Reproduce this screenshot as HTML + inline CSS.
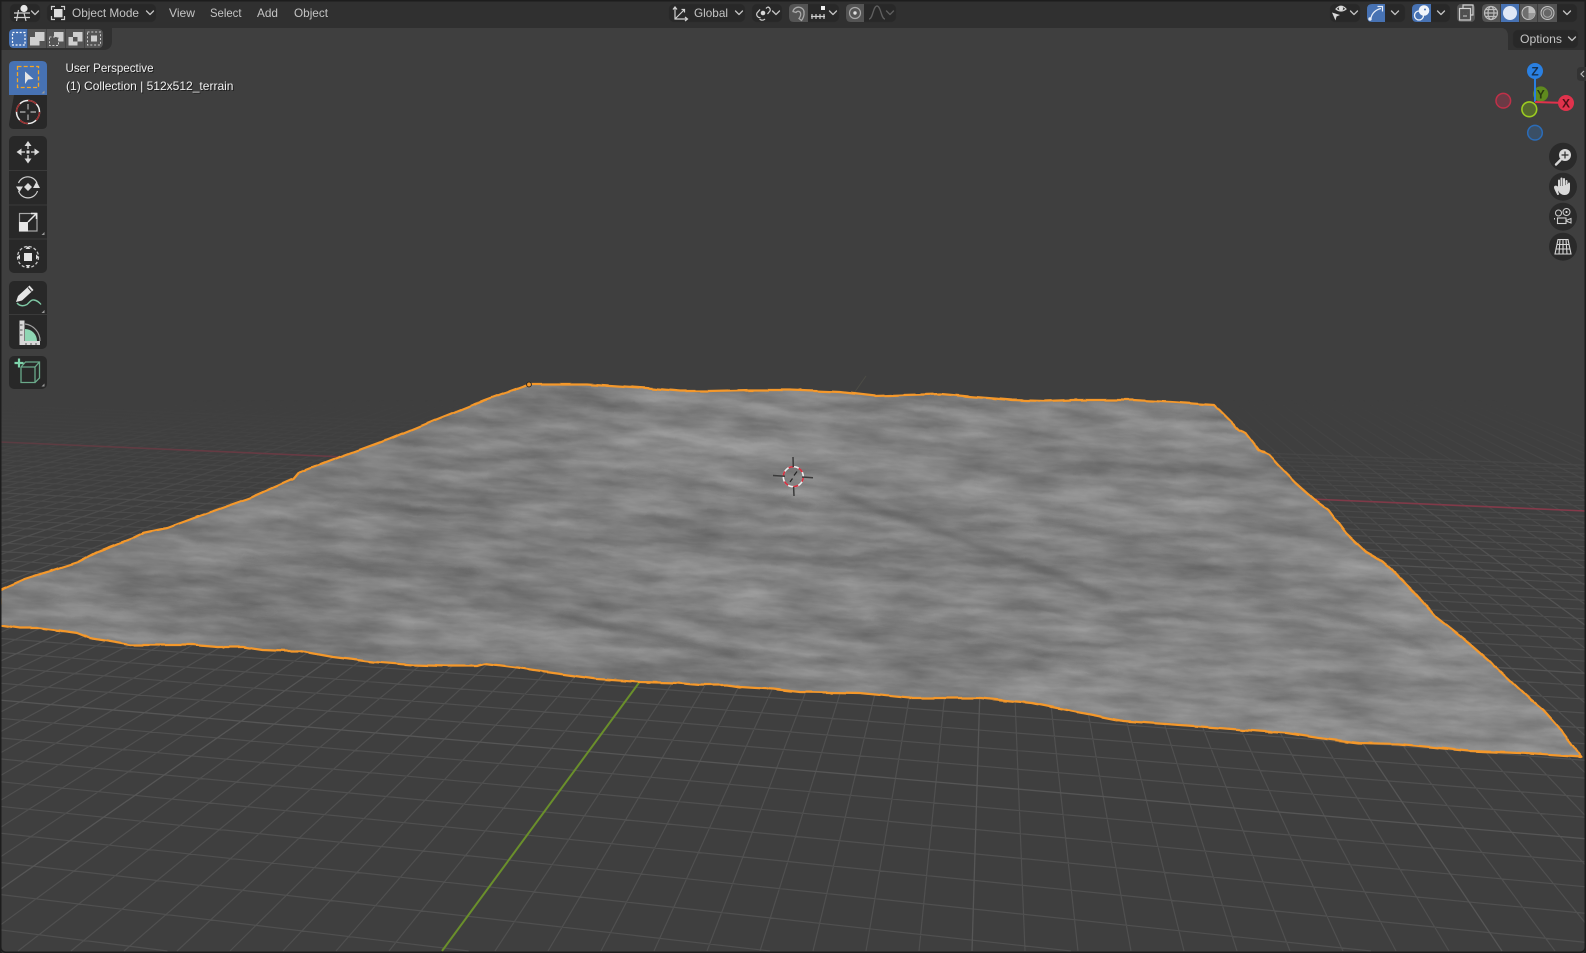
<!DOCTYPE html>
<html lang="en"><head><meta charset="utf-8"><title>Blender viewport</title>
<style>
html,body{margin:0;padding:0;background:#1d1d1d;width:1586px;height:953px;overflow:hidden}
svg{display:block;position:absolute;left:0;top:0}
text{font-family:"Liberation Sans",sans-serif;font-size:12px;fill:#c4c4c4}
.ch{fill:none;stroke:#c4c4c4;stroke-width:1.3;stroke-linecap:round;stroke-linejoin:round}
.ic{fill:none;stroke:#d0d0d0;stroke-width:1.2}
.w{fill:#d8d8d8;stroke:none}
</style></head><body>
<svg width="1586" height="953" viewBox="0 0 1586 953" xmlns="http://www.w3.org/2000/svg">
<defs>
<linearGradient id="fd" gradientUnits="userSpaceOnUse" x1="0" y1="400" x2="0" y2="700">
<stop offset="0" stop-color="#fff" stop-opacity="0"/><stop offset=".23" stop-color="#fff" stop-opacity=".4"/><stop offset=".53" stop-color="#fff" stop-opacity=".85"/><stop offset="1" stop-color="#fff" stop-opacity="1"/>
</linearGradient>
<mask id="gm" maskUnits="userSpaceOnUse" x="0" y="0" width="1586" height="953"><rect width="1586" height="953" fill="url(#fd)"/></mask>
<linearGradient id="red" gradientUnits="userSpaceOnUse" x1="0" y1="0" x2="1586" y2="0">
<stop offset="0" stop-color="#5a3c42"/><stop offset=".25" stop-color="#6d3a44"/><stop offset=".85" stop-color="#7e3a48"/><stop offset="1" stop-color="#843a4a"/>
</linearGradient>
<clipPath id="tc"><polygon id="tp" points="529,384 587,384 617,386 647,388 680,391 708,391 750,390 789,390 840,392 875,396 905,395 941,394 975,397 1012,400 1045,401 1072,400 1100,400 1133,400 1170,402 1214,405 1239,430 1246,433 1259,450 1269,455 1279,466 1296,483 1314,499 1329,510 1346,533 1366,552 1383,562 1391,569 1414,592 1436,617 1465,640 1497,668 1531,700 1543,710 1559,728 1581,757 1519,753 1469,751 1399,744 1359,743 1319,738 1286,733 1244,730 1194,726 1123,721 1072,711 1032,703 981,698 910,698 860,693 800,692 773,689 740,687 727,685 700,685 677,683 640,682 597,679 553,673 517,668 485,664 477,666 447,666 413,665 373,662 333,657 300,651 287,651 263,650 243,647 217,647 193,645 130,645 90,638 77,633 40,628 20,628 0,625 0,590 25,579 78,562 97,552 133,538 143,533 167,528 213,511 250,498 293,479 298,473 340,457 389,439 435,420 485,400 529,384"/></clipPath>
<filter id="noise" x="0" y="0" width="100%" height="100%" color-interpolation-filters="sRGB">
<feTurbulence type="fractalNoise" baseFrequency="0.005 0.03" numOctaves="3" seed="7" result="t1"/>
<feColorMatrix in="t1" type="matrix" values="1 0 0 0 0  1 0 0 0 0  1 0 0 0 0  0 0 0 0 1" result="a"/>
<feTurbulence type="fractalNoise" baseFrequency="0.018 0.09" numOctaves="4" seed="23" result="t2"/>
<feColorMatrix in="t2" type="matrix" values="1 0 0 0 0  1 0 0 0 0  1 0 0 0 0  0 0 0 0 1" result="b"/>
<feComposite in="a" in2="b" operator="arithmetic" k1="0" k2=".5" k3=".5" k4="0" result="c"/>
<feColorMatrix in="c" type="matrix" values=".38 0 0 0 .325  .38 0 0 0 .325  .38 0 0 0 .325  0 0 0 0 1"/>
</filter>
<filter id="wig" filterUnits="userSpaceOnUse" x="-5" y="370" width="1596" height="400" color-interpolation-filters="sRGB">
<feTurbulence type="fractalNoise" baseFrequency="0.05" numOctaves="2" seed="4" result="n"/>
<feDisplacementMap in="SourceGraphic" in2="n" scale="3" xChannelSelector="R" yChannelSelector="G"/>
</filter>
<filter id="bl" x="-20%" y="-200%" width="140%" height="500%"><feGaussianBlur stdDeviation="5 3"/></filter>
<linearGradient id="tone" gradientUnits="userSpaceOnUse" x1="0" y1="400" x2="1586" y2="750">
<stop offset="0" stop-color="#000" stop-opacity=".07"/><stop offset=".5" stop-color="#000" stop-opacity=".01"/><stop offset="1" stop-color="#fff" stop-opacity=".09"/>
</linearGradient>
</defs>

<!-- viewport -->
<rect width="1586" height="953" rx="4" fill="#3f3f3f"/>

<!-- grid -->
<g mask="url(#gm)" fill="none">
<path stroke="#505050" stroke-width="1.2" d="M0 929.8L167.5 951M0 894.5L468.7 951M0 862.4L770 951M0 833.1L1071 951M0 806.3L1371 951M0 781.7L1586 942.4M0 758.9L1586 913.4M0 737.9L1586 886.8M0 718.3L1586 861.9M0 683.2L1586 817.3M0 667.3L1586 797.1M0 652.4L1586 778.2M0 638.4L1586 760.4M0 625.3L1586 743.8M0 612.9L1586 728M0 601.2L1586 713.1M0 590.2L1586 699.2M0 579.7L1586 685.8M0 560.3L1586 661.2M0 551.4L1586 649.9M0 542.8L1586 639M0 534.7L1586 628.7M0 526.9L1586 618.8M0 519.5L1586 609.4M0 512.4L1586 600.4M0 505.6L1586 591.7M0 499.1L1586 583.5M0 486.8L1586 567.8M0 481L1586 560.5M0 475.5L1586 553.5M0 470.2L1586 546.7M0 465.1L1586 540.3M0 460.1L1586 533.9M0 455.3L1586 527.8M0 450.7L1586 522M0 446.3L1586 516.4M0 437.9L1586 505.7M0 433.9L1586 500.6M0 430L1586 495.7M0 426.2L1586 490.9M0 422.6L1586 486.3M0 419.1L1586 481.8M0 415.6L1586 477.4M0 412.3L1586 473.2M0 409.1L1586 469.1
M-1943 951L353.6 360M-1890 951L365.2 360M-1837 951L376.8 360M-1784 951L388.4 360M-1731 951L399.9 360M-1625 951L423.1 360M-1572 951L434.6 360M-1519 951L446.2 360M-1466 951L457.8 360M-1413 951L469.3 360M-1360 951L480.9 360M-1307 951L492.5 360M-1254 951L504.1 360M-1201 951L515.6 360M-1095 951L538.8 360M-1042 951L550.3 360M-989 951L561.9 360M-936 951L573.5 360M-883 951L585.1 360M-830 951L596.6 360M-777 951L608.2 360M-724 951L619.8 360M-671 951L631.3 360M-565 951L654.5 360M-512 951L666.1 360M-459 951L677.6 360M-406 951L689.2 360M-353 951L700.8 360M-300 951L712.3 360M-247 951L723.9 360M-194 951L735.5 360M-141 951L747 360M-35 951L770.2 360M18 951L781.7 360M71 951L793.3 360M124 951L804.9 360M177 951L816.5 360M230 951L828 360M283 951L839.6 360M336 951L851.2 360M389 951L862.7 360M495 951L885.9 360M548 951L897.4 360M601 951L909 360M654 951L920.6 360M707 951L932.2 360M760 951L943.7 360M813 951L955.3 360M866 951L966.9 360M919 951L978.4 360M1025 951L1001.6 360M1078 951L1013.1 360M1131 951L1024.7 360M1184 951L1036.3 360M1237 951L1047.9 360M1290 951L1059.4 360M1343 951L1071 360M1396 951L1082.6 360M1449 951L1094.1 360M1555 951L1117.3 360M1608 951L1128.8 360M1661 951L1140.4 360M1714 951L1152 360M1767 951L1163.6 360M1820 951L1175.1 360M1873 951L1186.7 360M1926 951L1198.3 360M1979 951L1209.8 360M2085 951L1233 360M2138 951L1244.5 360M2191 951L1256.1 360M2244 951L1267.7 360M2297 951L1279.3 360M2350 951L1290.8 360M2403 951L1302.4 360M2456 951L1314 360M2509 951L1325.5 360M2615 951L1348.7 360M2668 951L1360.2 360M2721 951L1371.8 360M2774 951L1383.4 360M2827 951L1395 360"/>
<path stroke="#565656" stroke-width="1.3" d="M0 700.1L1586 838.8M0 569.8L1586 673.3M0 492.8L1586 575.5M0 406L1586 465.2M-1678 951L411.5 360M-1148 951L527.2 360M-618 951L642.9 360M-88 951L758.6 360M972 951L990 360M1502 951L1105.7 360M2032 951L1221.4 360M2562 951L1337.1 360"/>
</g>
<line x1="0" y1="442" x2="1586" y2="511" stroke="url(#red)" stroke-width="1.6"/>
<line x1="442" y1="951" x2="641" y2="680" stroke="#6a8f2b" stroke-width="2"/>
<line x1="852" y1="396" x2="866" y2="376" stroke="#4c4c46" stroke-width="1"/>

<!-- terrain -->
<g filter="url(#wig)">
<g clip-path="url(#tc)">
<rect x="-60" y="320" width="1710" height="500" fill="#808080" filter="url(#noise)" transform="rotate(3 793 560)"/>
<rect x="0" y="370" width="1586" height="400" fill="url(#tone)"/>
<g filter="url(#bl)" fill="none" stroke="#4e4e4e" stroke-linecap="round">
<path stroke-width="7" opacity=".5" d="M840 495C920 525 1020 560 1110 597"/>
<path stroke-width="6" opacity=".4" d="M1040 520C1090 530 1140 540 1200 552"/>
<path stroke-width="7" opacity=".5" d="M570 617C620 630 680 640 735 655"/>
<path stroke-width="6" opacity=".35" d="M250 558C320 560 400 566 470 572"/>
<path stroke-width="5" opacity=".35" d="M340 505C400 510 450 512 510 516"/>
<path stroke-width="5" opacity=".35" d="M630 470C690 480 750 495 810 505"/>
<path stroke-width="6" opacity=".35" d="M1240 590C1300 605 1360 615 1430 650"/>
<path stroke-width="6" opacity=".3" d="M880 620C960 630 1030 650 1110 672"/>
<path stroke-width="5" opacity=".3" d="M60 600C130 598 200 606 270 612"/>
</g>
</g>
<use href="#tp" fill="none" stroke="#f4982b" stroke-width="2.2" stroke-linejoin="round"/>
</g>
<circle cx="529" cy="384.5" r="2.4" fill="#f4982b" stroke="#222" stroke-width=".9"/>

<!-- 3D cursor -->
<g>
<circle cx="793.3" cy="476.7" r="10" fill="none" stroke="#eee" stroke-width="1.6"/>
<circle cx="793.3" cy="476.7" r="10" fill="none" stroke="#d83040" stroke-width="1.7" stroke-dasharray="5.2 5.3"/>
<path d="M793 457L793.3 467M793.6 487L794 496M773 475.5L785 476.3M802 477L813 477.8" stroke="#3a3a3a" stroke-width="1.5" fill="none"/>
<path d="M790 482L792.5 478.5M794 475.5L797 471.5" stroke="#222" stroke-width="1.2" fill="none"/>
</g>

<!-- window frame -->
<rect x=".75" y=".75" width="1584.5" height="951.5" rx="5" fill="none" stroke="#1d1d1d" stroke-width="1.5"/>

<!-- header -->
<rect x="0" y="0" width="1586" height="28" fill="#303030"/>
<rect x="0" y="0" width="1586" height="1.5" fill="#1d1d1d"/>
<path d="M0 28H112V41Q112 50 103 50H0Z" fill="#303030"/>
<path d="M1586 28H1503Q1508 30 1508 36V50H1586Z" fill="#303030"/>
<rect x="0" y="0" width="1.5" height="953" fill="#1d1d1d"/>
<rect x="1584.5" y="0" width="1.5" height="953" fill="#1d1d1d"/>
<g fill="#282828" stroke="#2c2c2c" stroke-width=".5">
<rect x="10" y="4" width="30" height="18" rx="5"/>
<rect x="47" y="4" width="109" height="18" rx="5"/>
<rect x="669" y="4" width="76" height="18" rx="5"/>
<rect x="752" y="4" width="30" height="18" rx="5"/>
<rect x="789" y="4" width="50" height="18" rx="5"/>
<rect x="846" y="4" width="50" height="18" rx="5"/>
<rect x="1330" y="4" width="30" height="18" rx="5"/>
<rect x="1367" y="4" width="38" height="18" rx="5"/>
<rect x="1412" y="4" width="38" height="18" rx="5"/>
<rect x="1482" y="4" width="95" height="18" rx="5"/>
<rect x="1513" y="30" width="65" height="18" rx="5"/>
</g>
<path d="M794 4H808V22H794Q789 22 789 17V9Q789 4 794 4Z" fill="#545454"/>
<path d="M851 4H864V22H851Q846 22 846 17V9Q846 4 851 4Z" fill="#545454"/>
<path d="M1372 4H1385V22H1372Q1367 22 1367 17V9Q1367 4 1372 4Z" fill="#4772b3"/>
<path d="M1417 4H1431V22H1417Q1412 22 1412 17V9Q1412 4 1417 4Z" fill="#4772b3"/>
<rect x="1457" y="4" width="18" height="18" rx="4" fill="#545454"/>
<path d="M1487 4H1500.5V22H1487Q1482 22 1482 17V9Q1482 4 1487 4Z" fill="#545454"/>
<rect x="1501" y="4" width="18" height="18" fill="#4772b3"/>
<rect x="1519.5" y="4" width="18" height="18" fill="#545454"/>
<rect x="1538" y="4" width="19" height="18" fill="#545454"/>

<!-- header icons -->
<path class="ic" d="M14 13H30M14 17.5H30M18.5 10L16.5 21M24 13L26 21"/>
<circle cx="24" cy="8.5" r="3.6" fill="#e6e6e6"/>
<path class="ch" transform="translate(35 13)" d="M-3.5 -2L0 1.5L3.5 -2"/>
<path class="ic" d="M51.5 10V6.5H55M61 6.5H64.5V10M64.5 16V19.5H61M55 19.5H51.5V16"/>
<rect x="54" y="9" width="8.5" height="8.3" fill="#dcdcdc"/>
<path class="ch" transform="translate(150 13)" d="M-3.5 -2L0 1.5L3.5 -2"/>
<path class="ic" d="M675 7.5V19H687M675 19L684 10M673 9.5L675 7L677 9.5M685 17L687.5 19L685 21M681.5 9.5L684.5 9.5L684.5 12.5"/>
<path class="ch" transform="translate(739 13)" d="M-3.5 -2L0 1.5L3.5 -2"/>
<path class="ic" d="M766 8.5A4.5 4.5 0 0 1 768 7A3 3 0 0 1 770 11L767.5 14M760.5 17.5A3.2 3.2 0 0 1 757 13L760 9.5" stroke-width="1.3"/>
<circle cx="763" cy="13" r="2.3" class="w"/>
<path class="ic" d="M759.5 19L761 20A4 4 0 0 0 765 19"/>
<path class="ch" transform="translate(776 13)" d="M-3.5 -2L0 1.5L3.5 -2"/>
<path d="M793 11.5A5.5 5 0 0 1 804 13C804.5 15 803 18.5 801.5 20.5L799 18.5C800.5 16.5 801 14.5 800.5 13A2.5 2.5 0 0 0 796 12.5Z" fill="none" stroke="#a8a8a8" stroke-width="1.3"/>
<path class="ic" d="M811 16.5H825M812 14V19M816 14V19M820 14V19M824 14V19" stroke-width="1"/>
<rect x="821" y="6" width="4" height="4" fill="#eee"/>
<path class="ch" transform="translate(833 13)" d="M-3.5 -2L0 1.5L3.5 -2"/>
<circle cx="855" cy="13" r="5.5" fill="none" stroke="#a8a8a8" stroke-width="1.2"/>
<circle cx="855" cy="13" r="1.7" fill="#e0e0e0"/>
<path fill="none" stroke="#5f5f5f" stroke-width="1.3" d="M869 19C873 19 873 6 877 6C881 6 881 19 885 19"/>
<path class="ch" style="stroke:#5f5f5f" transform="translate(890 13)" d="M-3.5 -2L0 1.5L3.5 -2"/>

<path class="ic" d="M1336 9Q1341 3.5 1346 9Q1341 13 1336 9Z"/>
<circle cx="1341" cy="8.5" r="2.2" fill="#ddd"/>
<path class="w" d="M1332 12.5L1340 15L1336.5 16.5L1335.5 20.5Z"/>
<path class="ch" transform="translate(1354 13)" d="M-3.5 -2L0 1.5L3.5 -2"/>
<path fill="none" stroke="#e8eef8" stroke-width="1.2" d="M1371 18C1372 13 1376 9.5 1381 8.5M1377.5 6.5H1382.5V11.5"/>
<circle cx="1370" cy="19" r="1.7" fill="#e8eef8"/>
<path class="ch" transform="translate(1395 13)" d="M-3.5 -2L0 1.5L3.5 -2"/>
<circle cx="1419" cy="15.5" r="4.5" fill="none" stroke="#f0f4fa" stroke-width="1.3"/>
<circle cx="1424" cy="10.5" r="5.3" fill="#f0f4fa"/>
<circle cx="1425" cy="9.5" r="1" fill="#4772b3"/>
<path class="ch" transform="translate(1441 13)" d="M-3.5 -2L0 1.5L3.5 -2"/>
<path class="ic" d="M1463 8V5H1473V15H1470.5"/>
<rect x="1459.5" y="8.5" width="11" height="11.5" fill="#4f4f4f" stroke="#d0d0d0" stroke-width="1.2"/>
<path d="M1463 13H1463.1M1467 13H1467.1M1463 16H1467" stroke="#ccc" stroke-width="1" fill="none"/>
<circle cx="1491" cy="13" r="6.5" class="ic" style="stroke:#bdbdbd"/>
<ellipse cx="1491" cy="13" rx="3" ry="6.5" class="ic" style="stroke:#bdbdbd"/>
<path class="ic" style="stroke:#bdbdbd" d="M1484.5 13H1497.5M1486 9.5H1496M1486 16.5H1496"/>
<circle cx="1510" cy="13" r="7" fill="#dfe7f5"/>
<circle cx="1528.5" cy="13" r="6.5" fill="#6f6f6f" stroke="#c4c4c4" stroke-width="1"/>
<path d="M1528.5 6.5A6.5 6.5 0 0 1 1535 13H1528.5Z" fill="#bdbdbd"/>
<path d="M1528.5 13H1535A6.5 6.5 0 0 1 1528.5 19.5Z" fill="#9a9a9a"/>
<circle cx="1547.5" cy="13" r="6.5" fill="#666" stroke="#c4c4c4" stroke-width="1"/>
<circle cx="1547.5" cy="13" r="4.2" fill="none" stroke="#a8a8a8" stroke-width="1"/>
<path class="ch" transform="translate(1567 13)" d="M-3.5 -2L0 1.5L3.5 -2"/>

<!-- header text -->
<text x="72" y="17" textLength="67" lengthAdjust="spacingAndGlyphs">Object Mode</text>
<text x="169" y="17" textLength="26" lengthAdjust="spacingAndGlyphs">View</text>
<text x="210" y="17" textLength="31.5" lengthAdjust="spacingAndGlyphs">Select</text>
<text x="257" y="17" textLength="21" lengthAdjust="spacingAndGlyphs">Add</text>
<text x="294" y="17" textLength="34" lengthAdjust="spacingAndGlyphs">Object</text>
<text x="694" y="17" textLength="34" lengthAdjust="spacingAndGlyphs">Global</text>
<text x="1520" y="43" textLength="42" lengthAdjust="spacingAndGlyphs">Options</text>
<path class="ch" transform="translate(1572 39)" d="M-3.5 -2L0 1.5L3.5 -2"/>

<!-- selection mode row -->
<path d="M14 29H27.5V48H14Q9 48 9 43V34Q9 29 14 29Z" fill="#4772b3"/>
<rect x="28" y="29" width="18.5" height="19" fill="#545454"/>
<rect x="47" y="29" width="18.5" height="19" fill="#545454"/>
<rect x="66" y="29" width="18.5" height="19" fill="#545454"/>
<path d="M85 29H98Q103 29 103 34V43Q103 48 98 48H85Z" fill="#545454"/>
<rect x="12.5" y="32.5" width="12.5" height="12.5" fill="none" stroke="#fff" stroke-width="1.2" stroke-dasharray="2 1.6"/>
<path d="M30 37H35V32H44.5V41H39.5V45.5H30Z" fill="#cfcfcf"/>
<path d="M54 37V32H63.5V41.5H58.5V37Z" fill="#cfcfcf"/>
<rect x="49.5" y="37" width="9" height="8.5" fill="none" stroke="#cfcfcf" stroke-dasharray="2 1.6"/>
<path d="M73 37V32H82.5V41.5H77.5V37ZM68.5 37H73V41.5H77.5V45.5H68.5Z" fill="#cfcfcf"/>
<rect x="87.5" y="32" width="13" height="13" fill="none" stroke="#cfcfcf" stroke-dasharray="2 1.8"/>
<rect x="91" y="35.5" width="6" height="6" fill="#cfcfcf"/>

<!-- overlay text -->
<g style="filter:drop-shadow(1px 1px 0 rgba(0,0,0,.55))">
<text x="65.5" y="72" textLength="88" lengthAdjust="spacingAndGlyphs" style="fill:#f0f0f0">User Perspective</text>
<text x="66" y="90" textLength="167.5" lengthAdjust="spacingAndGlyphs" style="fill:#f0f0f0">(1) Collection | 512x512_terrain</text>
</g>

<!-- toolbar -->
<g fill="#282828">
<path d="M14 95H47V124Q47 129 42 129H14Q9 129 9 124Z"/>
<rect x="9" y="136" width="38" height="137" rx="5"/>
<rect x="9" y="281" width="38" height="68" rx="5"/>
<rect x="9" y="356" width="38" height="33" rx="5"/>
</g>
<path d="M14 61H42Q47 61 47 66V95H9V66Q9 61 14 61Z" fill="#4772b3"/>
<path d="M9 170.5H47M9 205H47M9 239H47M9 314.5H47" stroke="#3a3a3a" stroke-width="1"/>
<g fill="#9a9a9a">
<path d="M44.5 90.5V93.5H41.5Z"/><path d="M44.5 232V235H41.5Z"/><path d="M44.5 310V313H41.5Z"/><path d="M44.5 383.5V386.5H41.5Z"/>
</g>
<rect x="17.5" y="66.5" width="21" height="21" fill="none" stroke="#f5a623" stroke-width="1.3" stroke-dasharray="4 2.2"/>
<path d="M25 71.5L33.5 79L28 79.5L25 84Z" fill="#e4e4e4"/>
<circle cx="28" cy="112" r="11.5" fill="none" stroke="#eee" stroke-width="1.5"/>
<circle cx="28" cy="112" r="11.5" fill="none" stroke="#9a3030" stroke-width="1.6" stroke-dasharray="9 9"/>
<path d="M28 104V109.5M28 114.5V120M20 112H25.5M30.5 112H36" stroke="#a0a0a0" stroke-width="1.4" fill="none"/>
<g fill="#dcdcdc">
<path d="M28 141L24.5 146H31.5ZM28 163.5L24.5 158.5H31.5ZM16.5 152L21.5 148.5V155.5ZM39.5 152L34.5 148.5V155.5Z"/>
<rect x="26.5" y="150.5" width="3" height="3"/>
</g>
<path d="M28 146V149M28 155V158.5M21.5 152H25M31 152H34.5" stroke="#dcdcdc" stroke-width="1.3" fill="none"/>
<path d="M18.5 183A10 10 0 0 1 37 183M37.5 191A10 10 0 0 1 18.5 191" fill="none" stroke="#cfcfcf" stroke-width="1.2"/>
<path d="M16 186.5H23L19.5 192ZM33 188H40L36.5 181.5Z" fill="#dcdcdc"/>
<path d="M28 183L32 187L28 191L24 187Z" fill="#dcdcdc"/>
<rect x="19.5" y="213.5" width="17.5" height="17.5" fill="none" stroke="#a8a8a8" stroke-width="1.2"/>
<rect x="19" y="222" width="9" height="9.5" fill="#e6e6e6"/>
<path d="M28 222L36 214M31 213.5H36.5V219" fill="none" stroke="#e6e6e6" stroke-width="1.5"/>
<circle cx="28" cy="257" r="10.5" fill="none" stroke="#c8c8c8" stroke-width="1.3" stroke-dasharray="3 2"/>
<rect x="24" y="253" width="8" height="8" fill="#e4e4e4"/>
<path d="M28 246L25.5 249H30.5ZM28 268L25.5 265H30.5ZM17 257L20 254.5V259.5ZM39 257L36 254.5V259.5Z" fill="#dcdcdc"/>
<path d="M16 302L18 296L29.5 285.5L33.5 290L22 300.5Z" fill="#e6e6e6"/>
<path d="M28 287.5L31.5 291.5" stroke="#333" stroke-width="1"/>
<path d="M17 303C20 306.5 24 306 27 304.5C30 302 31 299.5 34 300C37 300.5 39 302 41 304.5" fill="none" stroke="#7fc9a5" stroke-width="1.4"/>
<path d="M25 324A17 17 0 0 1 40 341" fill="none" stroke="#a0a0a0" stroke-width="1.2"/>
<path d="M25 341V329A12 12 0 0 1 37 341Z" fill="#8fd6b4"/>
<path d="M19.5 320.5H24.5V341H40V345H19.5Z" fill="#d8d8d8"/>
<path d="M20 325H22.5M20 330H22.5M20 335H22.5M26 343V345M31 343V345M36 343V345" stroke="#555" stroke-width="1" fill="none"/>
<path d="M21 367H35L39.5 362M21 367V382.5H35V367M35 382.5L39.5 378V362H25.5L21 367" fill="none" stroke="#6aa98a" stroke-width="1.3"/>
<path d="M19 358.5V367.5M14.5 363H23.5" stroke="#7ed4ab" stroke-width="2.2"/>

<!-- gizmo -->
<path d="M1586 67H1581Q1577 67 1577 71V77Q1577 81 1581 81H1586Z" fill="#333"/>
<path d="M1584 71L1581 74L1584 77" fill="none" stroke="#b8b8b8" stroke-width="1.2"/>
<circle cx="1503.3" cy="100.7" r="7.3" fill="#6b3a45" stroke="#c03048" stroke-width="1.5"/>
<circle cx="1535" cy="132.7" r="7.3" fill="#3a4f66" stroke="#2b6cb8" stroke-width="1.5"/>
<circle cx="1540.7" cy="94" r="7.6" fill="#5f8a1e"/>
<line x1="1535" y1="71" x2="1535" y2="102" stroke="#2a7fe0" stroke-width="2"/>
<line x1="1535" y1="102" x2="1566" y2="103" stroke="#e0324c" stroke-width="2"/>
<circle cx="1535" cy="71" r="8" fill="#2a80e2"/>
<circle cx="1566" cy="103" r="8" fill="#e0324c"/>
<circle cx="1529.3" cy="109.3" r="7.4" fill="#55682f" stroke="#9ccc20" stroke-width="1.6"/>
<text x="1535" y="75.3" text-anchor="middle" style="font-size:12px;font-weight:bold;fill:#15304f">Z</text>
<text x="1540.7" y="98.3" text-anchor="middle" style="font-size:12px;font-weight:bold;fill:#2a3a10">Y</text>
<text x="1566" y="107.3" text-anchor="middle" style="font-size:12px;font-weight:bold;fill:#4d1018">X</text>

<!-- nav buttons -->
<g fill="#2a2a2a">
<circle cx="1563" cy="156.7" r="14"/><circle cx="1563" cy="186.7" r="14"/><circle cx="1563" cy="216.7" r="14"/><circle cx="1563" cy="246.7" r="14"/>
</g>
<circle cx="1565" cy="155" r="6" fill="#d8d8d8"/>
<path d="M1565 151.5V158.5M1561.5 155H1568.5" stroke="#2a2a2a" stroke-width="1.2"/>
<path d="M1560.5 160L1556 164.5" stroke="#d8d8d8" stroke-width="2.4" stroke-linecap="round"/>
<path d="M1558 194C1556 190 1554.5 188 1555 187C1556 186 1558 187.5 1559 189V180.5M1561.5 190V178.5M1564 190V179M1566.5 190.5V181M1558.5 188C1559 192 1562 194 1564.5 194C1568 194 1569 191 1569 188V183.5" fill="#d8d8d8" stroke="#d8d8d8" stroke-width="2" stroke-linecap="round" stroke-linejoin="round"/>
<rect x="1559.5" y="186" width="8" height="7" fill="#d8d8d8"/>
<circle cx="1558.5" cy="213" r="3" class="ic" style="stroke-width:1"/>
<circle cx="1566.5" cy="212" r="3.5" class="ic" style="stroke-width:1"/>
<circle cx="1566.5" cy="212" r="1.1" class="w"/>
<rect x="1557.5" y="218" width="8.5" height="5.5" class="ic" style="stroke-width:1.1"/>
<path d="M1554.5 218V219.5M1566 220.5L1571 218.5V223L1566 221Z" class="ic" style="stroke-width:1"/>
<path d="M1558 239.5H1568L1571 254H1555ZM1563 239.5V254M1557 244.5H1569M1556 249H1570M1560 239.5L1559 254M1566 239.5L1567 254" fill="none" stroke="#d8d8d8" stroke-width="1.1"/>
</svg>
</body></html>
